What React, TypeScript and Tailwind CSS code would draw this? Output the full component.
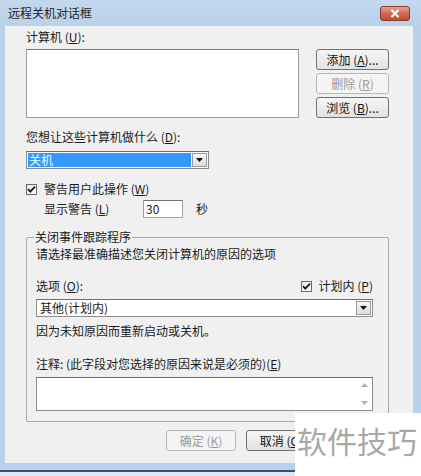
import React from "react";

const font = { fontFamily: '"Noto Sans CJK SC", "Liberation Sans", sans-serif' };

function Btn({ children, disabled, className = "" }: { children: React.ReactNode; disabled?: boolean; className?: string }) {
  return (
    <div
      className={`flex items-center justify-center rounded-[3px] border text-[12px] leading-none ${
        disabled
          ? "border-[#b5b8ba] bg-[#f4f4f4] text-[#9a9a9a]"
          : "border-[#707070] bg-gradient-to-b from-[#f6f6f6] to-[#e2e2e2] text-[#111]"
      } ${className}`}
    >
      {children}
    </div>
  );
}

function Check() {
  return (
    <div className="flex h-[11px] w-[11px] items-center justify-center border border-[#6b6b6b] bg-gradient-to-br from-[#e6e6e6] to-white">
      <svg width="9" height="9" viewBox="0 0 9 9">
        <path d="M1 4.2 L3.3 6.6 L8 1.6" stroke="#1a1a1a" strokeWidth="1.8" fill="none" />
      </svg>
    </div>
  );
}

function Arrow() {
  return (
    <svg width="7" height="4" viewBox="0 0 7 4">
      <path d="M0 0 H7 L3.5 4 Z" fill="#111" />
    </svg>
  );
}

export default function App() {
  return (
    <div className="relative flex h-[476px] w-[421px] flex-col overflow-hidden bg-[#b9d1ea] text-[#1a1a1a]" style={font}>
      {/* title bar */}
      <div className="flex h-[26px] shrink-0 items-center justify-between bg-gradient-to-b from-[#c4d8ee] to-[#b9d1ea] pl-[8px] pr-[11px]">
        <span className="text-[12px] leading-none text-[#1e1e1e]">远程关机对话框</span>
        <div className="flex h-[15px] w-[30px] items-center justify-center rounded-[3px] border border-[#8a3b2e] bg-gradient-to-b from-[#e6a493] via-[#cf6a52] to-[#c24a32]">
          <svg width="10" height="9" viewBox="0 0 10 9">
            <path d="M1.5 1 L8.5 8 M8.5 1 L1.5 8" stroke="#fff" strokeWidth="2.2" />
          </svg>
        </div>
      </div>

      {/* client area */}
      <div className="mx-[5px] h-[437px] w-[408px] shrink-0 bg-[#f0f0f0] pl-[21px] pt-[4px]">
        <div className="text-[12px] leading-[14px]">
          计算机 (<u>U</u>):
        </div>
        <div className="mt-[5px] flex">
          <div className="h-[69px] w-[273px] border border-[#9c9c9c] border-t-[#7a7a7a] bg-white" />
          <div className="ml-[17px] flex flex-col gap-[3px]">
            <Btn className="h-[21px] w-[73px]">添加 (<u>A</u>)...</Btn>
            <Btn disabled className="h-[21px] w-[73px]">删除 (<u>R</u>)</Btn>
            <Btn className="h-[21px] w-[73px]">浏览 (<u>B</u>)...</Btn>
          </div>
        </div>

        <div className="mt-[12px] text-[12px] leading-[14px]">
          您想让这些计算机做什么 (<u>D</u>):
        </div>
        <div className="mt-[7px] flex h-[18px] w-[183px] border border-[#8d8d8d] border-t-[#6e6e6e] bg-white p-[1px]">
          <div className="flex flex-1 items-center bg-[#3399ff] pl-[1px] text-[12px] leading-none text-[#e8ffff]">关机</div>
          <div className="ml-[1px] flex w-[15px] items-center justify-center border border-[#9a9a9a] bg-gradient-to-b from-[#f8f8f8] to-[#dcdcdc]">
            <Arrow />
          </div>
        </div>

        <div className="mt-[14px] flex items-center">
          <Check />
          <span className="ml-[7px] text-[12px] leading-none">
            警告用户此操作 (<u>W</u>)
          </span>
        </div>
        <div className="mt-[5px] flex items-center pl-[18px]">
          <span className="w-[99px] text-[12px] leading-none">
            显示警告 (<u>L</u>)
          </span>
          <div className="flex h-[18px] w-[40px] items-center border border-[#a0a0a0] border-t-[#707070] bg-white pl-[2px] text-[12px] leading-none">
            30
          </div>
          <span className="ml-[13px] text-[12px] leading-none">秒</span>
        </div>

        {/* group box */}
        <div className="relative mt-[19px] h-[185px] w-[363px] rounded-[2px] border border-[#a9a9a9] pl-[9px] pt-[9px]">
          <span className="absolute left-[7px] top-[-8px] bg-[#f0f0f0] px-[1px] text-[12px] leading-[14px]">关闭事件跟踪程序</span>
          <div className="text-[12px] leading-[14px]">请选择最准确描述您关闭计算机的原因的选项</div>
          <div className="mt-[18px] flex w-[337px] items-center justify-between">
            <span className="text-[12px] leading-[14px]">
              选项 (<u>O</u>):
            </span>
            <div className="flex items-center">
              <Check />
              <span className="ml-[7px] text-[12px] leading-none">
                计划内 (<u>P</u>)
              </span>
            </div>
          </div>
          <div className="mt-[6px] flex h-[18px] w-[337px] border border-[#8d8d8d] border-t-[#6e6e6e] bg-white p-[1px]">
            <div className="flex flex-1 items-center pl-[2px] text-[12px] leading-none">其他(计划内)</div>
            <div className="ml-[1px] flex w-[15px] items-center justify-center border border-[#9a9a9a] bg-gradient-to-b from-[#f8f8f8] to-[#dcdcdc]">
              <Arrow />
            </div>
          </div>
          <div className="mt-[7px] text-[12px] leading-[14px]">因为未知原因而重新启动或关机。</div>
          <div className="mt-[19px] text-[12px] leading-[14px]">
            注释: (此字段对您选择的原因来说是必须的)(<u>E</u>)
          </div>
          <div className="mt-[6px] flex h-[34px] w-[337px] border border-[#8d8d8d] border-t-[#6e6e6e] bg-white">
            <div className="flex-1" />
            <div className="flex w-[16px] flex-col items-center justify-between py-[5px]">
              <svg width="7" height="4" viewBox="0 0 7 4">
                <path d="M0 4 H7 L3.5 0 Z" fill="#b0b0b0" />
              </svg>
              <svg width="7" height="4" viewBox="0 0 7 4">
                <path d="M0 0 H7 L3.5 4 Z" fill="#b0b0b0" />
              </svg>
            </div>
          </div>
        </div>

        <div className="mt-[8px] flex gap-[10px] pl-[140px]">
          <Btn disabled className="h-[21px] w-[70px]">确定 (<u>K</u>)</Btn>
          <Btn className="h-[21px] w-[70px]">取消 (<u>C</u>)</Btn>
        </div>
      </div>

      <div className="mt-[7px] h-[2px] shrink-0 bg-[#3b536d]" />
      <div className="flex-1 bg-[#dfe8f2]" />

      {/* watermark overlay */}
      <div className="absolute left-[295px] top-[413px] flex h-[63px] w-[126px] items-start bg-white pl-[2px] pt-[9px]">
        <span className="text-[30px] leading-[36px] text-[#a8a8a8]">软件技巧</span>
      </div>
    </div>
  );
}
